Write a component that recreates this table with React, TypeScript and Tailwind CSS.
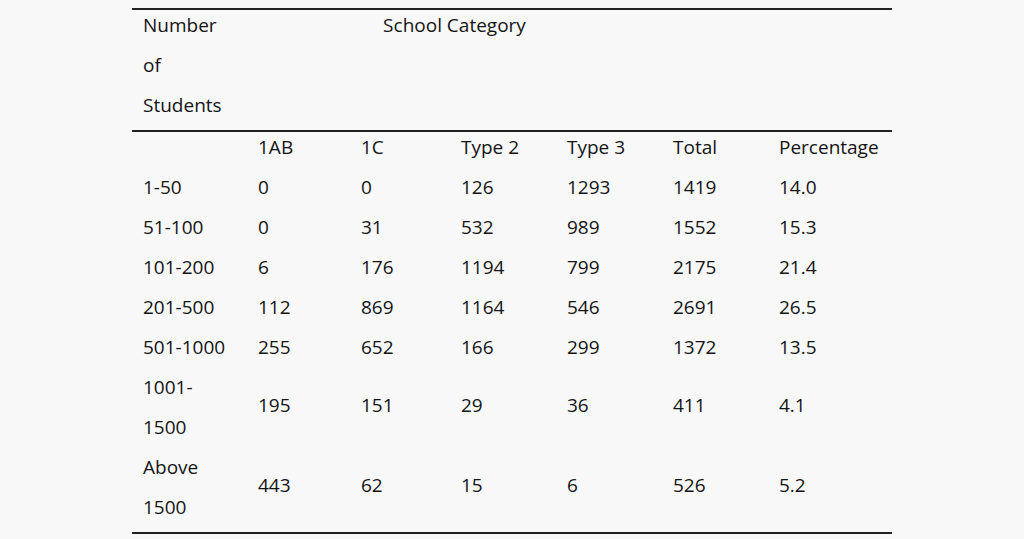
const cols = 'grid grid-cols-[115px_103px_100px_106px_106px_106px_124px]';

const rows: { label: string[]; values: string[] }[] = [
  { label: ['1-50'], values: ['0', '0', '126', '1293', '1419', '14.0'] },
  { label: ['51-100'], values: ['0', '31', '532', '989', '1552', '15.3'] },
  { label: ['101-200'], values: ['6', '176', '1194', '799', '2175', '21.4'] },
  { label: ['201-500'], values: ['112', '869', '1164', '546', '2691', '26.5'] },
  { label: ['501-1000'], values: ['255', '652', '166', '299', '1372', '13.5'] },
  { label: ['1001-', '1500'], values: ['195', '151', '29', '36', '411', '4.1'] },
  { label: ['Above', '1500'], values: ['443', '62', '15', '6', '526', '5.2'] },
];

const headers = ['1AB', '1C', 'Type 2', 'Type 3', 'Total', 'Percentage'];

function Line({ children }: { children: React.ReactNode }) {
  return <div className="h-[40px] leading-[30px] pl-[11px] whitespace-nowrap">{children}</div>;
}

export default function App() {
  return (
    <div className="w-full h-[539px] bg-[#f8f8f8] text-[#141414] text-[19px] pt-[8px] overflow-hidden"
      style={{ fontFamily: '"Open Sans", "Noto Sans", sans-serif' }}>
      <div className="ml-[132px] w-[760px]">
        <div className={`${cols} border-t-2 border-b-2 border-[#222]`}>
          <div>
            <Line>Number</Line>
            <Line>of</Line>
            <Line>Students</Line>
          </div>
          <div className="col-span-4 text-center h-[40px] leading-[30px]">School Category</div>
          <div className="col-span-2" />
        </div>
        <div className={`${cols} border-b-2 border-[#222]`}>
          <Line>{''}</Line>
          {headers.map(h => <Line key={h}>{h}</Line>)}
          {rows.map(r => r.label.length === 1 ? (
            <div key={r.label[0]} className="contents">
              <Line>{r.label[0]}</Line>
              {r.values.map((v, i) => <Line key={i}>{v}</Line>)}
            </div>
          ) : (
            <div key={r.label.join()} className="contents">
              <div>
                {r.label.map(l => <Line key={l}>{l}</Line>)}
              </div>
              {r.values.map((v, i) => (
                <div key={i} className="h-[80px] flex items-center pb-[14px] leading-[30px] pl-[11px]">{v}</div>
              ))}
            </div>
          ))}
        </div>
      </div>
    </div>
  );
}
